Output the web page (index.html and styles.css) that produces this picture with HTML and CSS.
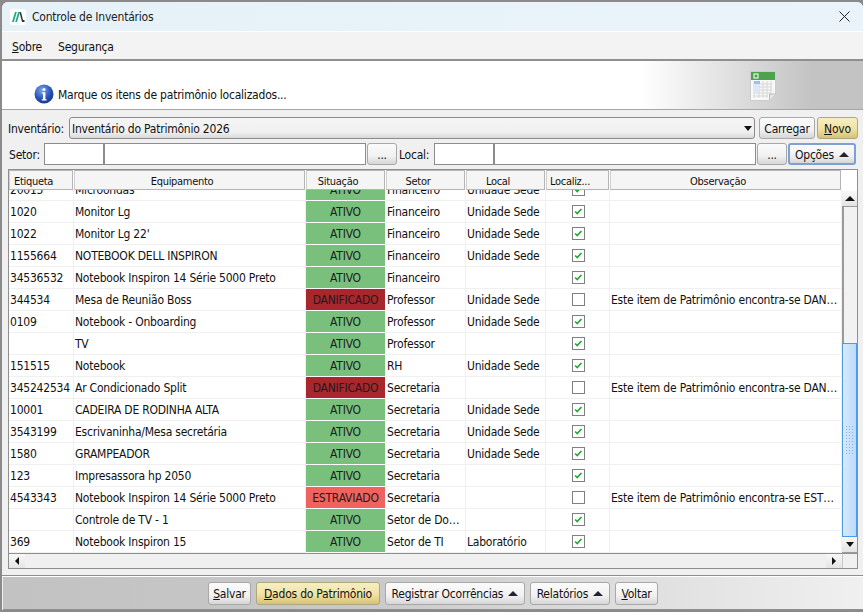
FILE: index.html
```html
<!DOCTYPE html>
<html lang="pt-BR">
<head>
<meta charset="utf-8">
<title>Controle de Inventários</title>
<link rel="stylesheet" href="styles.css">
</head>
<body>
<div class="window">
  <header class="titlebar">
    <svg class="logo" width="16" height="16" viewBox="0 0 16 16"><rect width="16" height="16" rx="2" fill="#fff"/><path d="M2 13 5 3h1.800L3.800 13z" fill="#1aa886"/><path d="M5.200 13 8.200 3H10L7 13z" fill="#1aa886"/><path d="M9.500 3.500 11 3l2 8h1.500v2H12z" fill="#333"/></svg>
    <span class="title">Controle de Inventários</span>
    <svg class="close" width="11" height="11" viewBox="0 0 11 11"><path d="M.5.5l10 10M10.500.5l-10 10" stroke="#222" fill="none"/></svg>
  </header>
  <nav class="menubar"><span><u>S</u>obre</span><span>Segurança</span></nav>
  <section class="banner">
    <svg class="info" width="20" height="20" viewBox="0 0 20 20"><defs><radialGradient id="ig" cx=".4" cy=".3" r=".8"><stop offset="0" stop-color="#7aa4ea"/><stop offset=".6" stop-color="#2350b8"/><stop offset="1" stop-color="#14307f"/></radialGradient></defs><circle cx="10" cy="10" r="9.500" fill="url(#ig)"/><circle cx="10" cy="5.500" r="1.600" fill="#fff"/><path d="M7.800 8.200h3.600v7h1.200v1.200H7.800v-1.200H9V9.400H7.800z" fill="#fff"/></svg>
    <span class="banner-text">Marque os itens de patrimônio localizados...</span>
    <svg class="sheet" width="26" height="30" viewBox="0 0 26 30"><path d="M.5.500h25v23l-6 6H.5z" fill="#f8f8f8" stroke="#ccc"/><rect x="1" y="1" width="24" height="8" fill="#4ea24e"/><rect x="4" y="3" width="4" height="4" fill="none" stroke="#fff"/><path d="M4 10v17M9 10v17M13 10v17M17 10v17M21 10v14M4 13h18M4 16h18M4 19h18M4 22h18M4 25h14" stroke="#d6d6d6" fill="none"/><rect x="4" y="10" width="6" height="3" fill="#9cc0ea"/><rect x="4" y="13" width="5" height="9" fill="#dbe8f6"/><path d="M19.500 29v-6h6" fill="#e4e4e4" stroke="#bbb"/></svg>
  </section>
  <main class="content">
    <div class="form-row">
      <label class="lbl-inv">Inventário:</label>
      <div class="select"><span>Inventário do Patrimônio 2026</span><i class="arrow-down"></i></div>
      <button class="btn carregar">Carregar</button>
      <button class="btn gold novo"><u>N</u>ovo</button>
    </div>
    <div class="form-row">
      <label class="lbl-setor">Setor:</label>
      <div class="input short"></div><div class="input long"></div>
      <button class="btn dots">...</button>
      <label class="lbl-local">Local:</label>
      <div class="input short"></div><div class="input long"></div>
      <button class="btn dots">...</button>
      <button class="btn opcoes focus">Opções <i class="arrow-up"></i></button>
    </div>
    <div class="grid">
      <div class="grid-main">
        <div class="head-row">
          <div class="th">Etiqueta</div><div class="th">Equipamento</div><div class="th">Situação</div><div class="th">Setor</div><div class="th">Local</div><div class="th">Localiz...</div><div class="th">Observação</div>
        </div>
        <div class="viewport">
          <div class="rows" id="rows"></div>
        </div>
      </div>
      <div class="vscroll">
        <div class="sb-btn"><i class="arrow-up dark"></i></div>
        <div class="sb-track"><div class="sb-thumb"><div class="grip"></div></div></div>
        <div class="sb-btn"><i class="arrow-down"></i></div>
      </div>
      <div class="hscroll">
        <div class="sb-btn h"><i class="arrow-left"></i></div>
        <div class="h-track"></div>
        <div class="sb-btn h"><i class="arrow-right"></i></div>
      </div>
      <div class="corner"></div>
    </div>
  </main>
  <footer class="footer">
    <button class="btn w-salvar"><u>S</u>alvar</button>
    <button class="btn gold w-dados"><u>D</u>ados do Patrimônio</button>
    <button class="btn w-registrar">Registrar Ocorrências <i class="arrow-up"></i></button>
    <button class="btn w-relatorios">Relatórios <i class="arrow-up"></i></button>
    <button class="btn w-salvar"><u>V</u>oltar</button>
  </footer>
</div>
<script src="app.js"></script>
</body>
</html>
```
FILE: styles.css
```css
* { box-sizing: border-box; }
html, body { margin: 0; height: 100%; }
body {
  background: #8a8a8a;
  font-family: "DejaVu Sans Condensed", "DejaVu Sans", sans-serif;
  font-stretch: condensed;
  font-size: 12px;
  letter-spacing: -0.22px;
  color: #111;
  overflow: hidden;
  padding: 2px 0 0 2px;
}
.window {
  width: 861px;
  height: 608px;
  display: flex;
  flex-direction: column;
  background: #f0f0f0;
  border-radius: 6px 6px 0 0;
  overflow: hidden;
}
.titlebar {
  height: 30px;
  flex: none;
  display: flex;
  align-items: center;
  padding: 0 13px 0 8px;
  background: linear-gradient(90deg, #e6f2f8, #eaf3fa);
  border-bottom: 1px solid #fff;
}
.logo { margin-right: 6px; }
.title { flex: 1; color: #222; }
.menubar {
  height: 29px;
  flex: none;
  display: flex;
  gap: 16px;
  align-items: center;
  padding: 2px 10px 0;
  background: #f3f3f3;
  border-bottom: 2px solid #8f8f8f;
}
.banner {
  height: 49px;
  flex: none;
  display: flex;
  align-items: center;
  padding: 18px 0 0 32px;
  position: relative;
  background: linear-gradient(90deg, #fff 0, #fff 640px, #c3c3c3 810px);
  border-bottom: 1px solid #a6a6a6;
}
.banner-text { margin: 2px 0 0 4px; }
.sheet { position: absolute; left: 748px; top: 10px; }
.content {
  flex: 1;
  display: flex;
  flex-direction: column;
  gap: 4px;
  padding: 7px 5px 6px 6px;
  min-height: 0;
  border-bottom: 1px solid #8f8f8f;
}
.form-row { display: flex; align-items: stretch; height: 22px; flex: none; }
.form-row label { margin-top: 2px; }
.lbl-inv { width: 61px; align-self: center; }
.lbl-setor { width: 36px; align-self: center; padding-left: 1px; }
.lbl-local { width: 36px; align-self: center; margin-left: 1px; padding-left: 1px; }
.select {
  width: 686px;
  display: flex;
  align-items: center;
  justify-content: space-between;
  padding: 1px 2px 0 2px;
  border: 1px solid #8c8c8c;
  border-radius: 3px;
  background: linear-gradient(#f5f5f5, #f0f0f0 70%, #d8d8d8);
}
.input { background: #fff; border: 1px solid #8c8c8c; }
.short { width: 60px; }
.long { width: 262px; }
.btn {
  font: inherit;
  letter-spacing: inherit;
  color: #111;
  padding: 1px 0 0;
  height: 23px;
  border: 1px solid #a8a8a8;
  border-radius: 3px;
  background: linear-gradient(#fbfbfb, #f1f1f1 60%, #d6d6d6);
  white-space: nowrap;
}
.form-row .btn { height: 22px; }
.w-salvar { width: 43px; }
.w-dados { width: 124px; }
.w-registrar { width: 140px; }
.w-relatorios { width: 80px; }
.carregar { width: 56px; margin-left: 4px; }
.novo { width: 41px; margin-left: 2px; }
.gold { background: linear-gradient(#f6eec4, #f0e2a4 55%, #d6c276); border-color: #b0a77c; }
.dots { width: 30px; margin-left: 1px; line-height: 1; }
.opcoes { width: 68px; margin-left: 1px; }
.focus { border: 2px solid #7ea0d4; }
i { display: inline-block; width: 0; height: 0; }
.arrow-down { border: 4px solid transparent; border-top: 5px solid #111; border-bottom: 0; }
.arrow-up { border: 5px solid transparent; border-bottom-color: #223; border-top: 0; vertical-align: 2px; margin-left: 2px; }
.arrow-up.dark { margin: 0; vertical-align: 0; border-bottom-color: #111; }
.arrow-left { border: 4.500px solid transparent; border-right: 4.500px solid #111; border-left: 0; }
.arrow-right { border: 4.500px solid transparent; border-left: 4.500px solid #111; border-right: 0; }
.grid {
  flex: 1;
  min-height: 0;
  display: grid;
  grid-template-columns: 833px 15px;
  grid-template-rows: 1fr 15px;
  border: 1px solid #8f8f8f;
  background: #fff;
  width: 850px;
}
.grid-main { min-width: 0; min-height: 0; display: flex; flex-direction: column; overflow: hidden; }
.head-row, .row { display: grid; grid-template-columns: 65px 232px 80px 80px 80px 64px 232px; }
.head-row { height: 20px; flex: none; }
.th {
  display: flex;
  align-items: center;
  justify-content: center;
  font-size: 11px;
  letter-spacing: -0.3px;
  background: #f5f5f5;
  border: 1px solid #b4b4b4;
  border-left-color: #cfcfcf;
  margin-right: 1px;
  padding: 3px 15px 0 0;
}
.viewport { flex: 1; overflow: hidden; min-height: 0; }
.rows { margin-top: -11px; }
.row { height: 22px; }
.cell {
  padding-left: 1px;
  line-height: 23px;
  height: 22px;
  white-space: nowrap;
  overflow: hidden;
  text-overflow: ellipsis;
  border-right: 1px solid #f0f0f0;
  border-bottom: 1px solid #f0f0f0;
}
.cell.obs { padding-right: 3px; }
.status {
  text-align: center;
  padding: 0;
  border-right: 1px solid #fff;
  border-bottom: 1px solid #fff;
  color: #1c1c1c;
}
.ativo { background: #78c07c; }
.danificado { background: #a8272c; }
.estraviado { background: #f0625e; }
.chk-cell { display: flex; align-items: center; justify-content: center; padding: 0 0 0 1px; }
.chk { width: 13px; height: 13px; border: 1px solid #808080; background: #fff; display: block; }
.vscroll { display: flex; flex-direction: column; padding-top: 21px; background: #fff; }
.sb-btn { height: 16px; flex: none; display: flex; align-items: center; justify-content: center; background: linear-gradient(#f8f8f8, #e4e4e4); border-bottom: 1px solid #9a9a9a; }
.sb-btn.h { width: 16px; height: 14px; border-bottom: 0; }
.sb-track { flex: 1; display: flex; flex-direction: column; background: #f2f2f2; padding-top: 136px; border-left: 2px solid #9a9a9a; }
.sb-thumb { flex: 1; display: flex; align-items: center; justify-content: center; background: linear-gradient(90deg, #d8eafc, #bcdafa); border: 1px solid #4c9ae6; margin-left: -2px; }
.grip { width: 10px; height: 30px; background-image: radial-gradient(#7fb4e6 40%, transparent 45%); background-size: 3px 3px; }
.hscroll { display: flex; background: #f0f0f0; border-top: 1px solid #8f8f8f; }
.h-track { flex: 1; background: #f0f0f0; }
.corner { background: #f0f0f0; border-top: 1px solid #8f8f8f; border-left: 1px solid #c8c8c8; }
.footer {
  height: 34px;
  flex: none;
  display: flex;
  align-items: center;
  justify-content: center;
  gap: 5px;
  margin-left: 1px;
  background: linear-gradient(90deg, #c2c2c2, #c8c8c8 40%, #f0f0f0 100%);
  border-top: 1px solid #fff;
  border-bottom: 1px solid #8f8f8f;
}
```
FILE: app.js
```javascript
var data = [
  ["20015","Microondas","A","Financeiro","Unidade Sede",1,""],
  ["1020","Monitor Lg","A","Financeiro","Unidade Sede",1,""],
  ["1022","Monitor Lg 22'","A","Financeiro","Unidade Sede",1,""],
  ["1155664","NOTEBOOK DELL INSPIRON","A","Financeiro","Unidade Sede",1,""],
  ["34536532","Notebook Inspiron 14 Série 5000 Preto","A","Financeiro","",1,""],
  ["344534","Mesa de Reunião Boss","D","Professor","Unidade Sede",0,"Este item de Patrimônio encontra-se DANIFICADO"],
  ["0109","Notebook - Onboarding","A","Professor","Unidade Sede",1,""],
  ["","TV","A","Professor","",1,""],
  ["151515","Notebook","A","RH","Unidade Sede",1,""],
  ["345242534","Ar Condicionado Split","D","Secretaria","",0,"Este item de Patrimônio encontra-se DANIFICADO"],
  ["10001","CADEIRA DE RODINHA ALTA","A","Secretaria","Unidade Sede",1,""],
  ["3543199","Escrivaninha/Mesa secretária","A","Secretaria","Unidade Sede",1,""],
  ["1580","GRAMPEADOR","A","Secretaria","Unidade Sede",1,""],
  ["123","Impresassora hp 2050","A","Secretaria","",1,""],
  ["4543343","Notebook Inspiron 14 Série 5000 Preto","E","Secretaria","",0,"Este item de Patrimônio encontra-se ESTRAVIADO"],
  ["","Controle de TV - 1","A","Setor de Documentos","",1,""],
  ["369","Notebook Inspiron 15","A","Setor de TI","Laboratório",1,""]
];
var st = { A: ["ativo", "ATIVO"], D: ["danificado", "DANIFICADO"], E: ["estraviado", "ESTRAVIADO"] };
var check = '<svg class="chk" viewBox="0 0 13 13"><path d="M2.500 6.500l2.500 2.500 5-5.500" fill="none" stroke="#22aa33" stroke-width="2"/></svg>';
var empty = '<span class="chk"></span>';
document.getElementById("rows").innerHTML = data.map(function (r) {
  var s = st[r[2]];
  return '<div class="row"><div class="cell">' + r[0] + '</div><div class="cell">' + r[1] +
    '</div><div class="cell status ' + s[0] + '">' + s[1] + '</div><div class="cell">' + r[3] +
    '</div><div class="cell">' + r[4] + '</div><div class="cell chk-cell">' + (r[5] ? check : empty) +
    '</div><div class="cell obs">' + r[6] + '</div></div>';
}).join("");
```
